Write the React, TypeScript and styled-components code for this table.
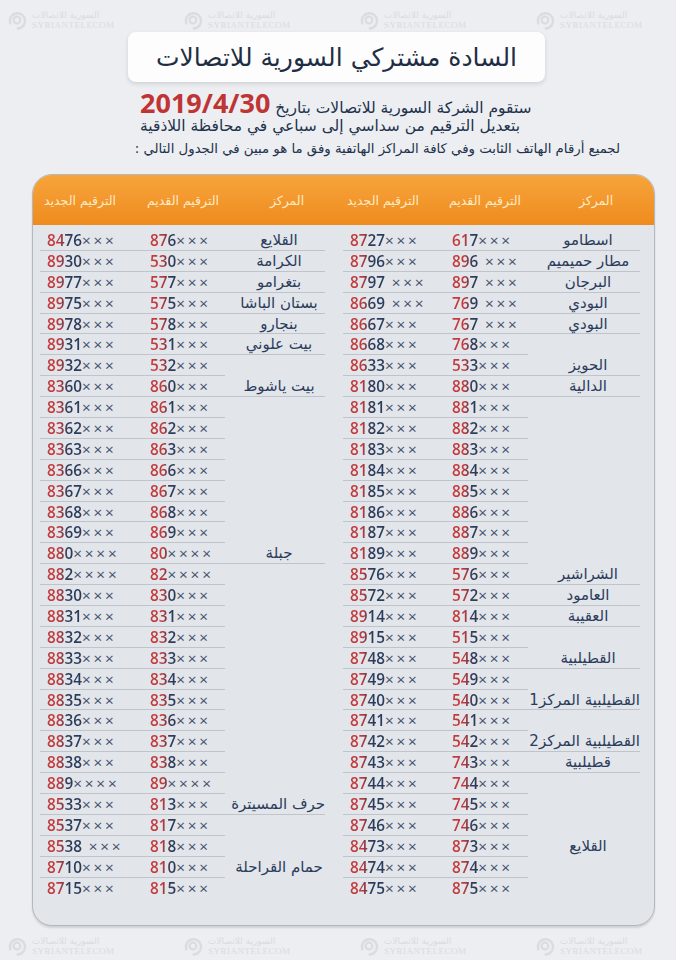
import React from "react";
import styled, { createGlobalStyle } from "styled-components";

type Row = [string, string];

interface Group {
    name?: string;
    rows: Row[];
}

const range = (from: number, to: number) => {
    const out: number[] = [];
    for (let i = from; i <= to; i++) out.push(i);
    return out;
};

const rightGroups: Group[] = [
    {name: "اسطامو", rows: [["8727×××", "617×××"]]},
    {name: "مطار حميميم", rows: [["8796×××", "896 ×××"]]},
    {name: "البرجان", rows: [["8797 ×××", "897 ×××"]]},
    {name: "البودي", rows: [["8669 ×××", "769 ×××"]]},
    {name: "البودي", rows: [["8667×××", "767 ×××"], ["8668×××", "768×××"]]},
    {name: "الحويز", rows: [["8633×××", "533×××"]]},
    {
        name: "الدالية",
        rows: [
            ...range(8180, 8187).map((n): Row => [`${n}×××`, `${n - 7300}×××`]),
            ["8189×××", "889×××"],
        ],
    },
    {name: "الشراشير", rows: [["8576×××", "576×××"]]},
    {name: "العامود", rows: [["8572×××", "572×××"]]},
    {name: "العقيبة", rows: [["8914×××", "814×××"], ["8915×××", "515×××"]]},
    {name: "القطيلبية", rows: [["8748×××", "548×××"], ["8749×××", "549×××"]]},
    {name: "القطيلبية المركز1", rows: [["8740×××", "540×××"], ["8741×××", "541×××"]]},
    {name: "القطيلبية المركز2", rows: [["8742×××", "542×××"]]},
    {
        name: "قطيلبية",
        rows: range(8743, 8746).map((n): Row => [`${n}×××`, `${n - 8000}×××`]),
    },
    {
        name: "القلايع",
        rows: range(8473, 8475).map((n): Row => [`${n}×××`, `${n - 7600}×××`]),
    },
];

const leftGroups: Group[] = [
    {name: "القلايع", rows: [["8476×××", "876×××"]]},
    {name: "الكرامة", rows: [["8930×××", "530×××"]]},
    {name: "بتغرامو", rows: [["8977×××", "577×××"]]},
    {name: "بستان الباشا", rows: [["8975×××", "575×××"]]},
    {name: "بنجارو", rows: [["8978×××", "578×××"]]},
    {name: "بيت علوني", rows: [["8931×××", "531×××"], ["8932×××", "532×××"]]},
    {
        name: "بيت ياشوط",
        rows: [8360, 8361, 8362, 8363, 8366, 8367, 8368, 8369].map(
            (n): Row => [`${n}×××`, `${n - 7500}×××`]
        ),
    },
    {
        name: "جبلة",
        rows: [
            ["880××××", "80××××"],
            ["882××××", "82××××"],
            ...range(8830, 8838).map((n): Row => [`${n}×××`, `${n - 8000}×××`]),
            ["889××××", "89××××"],
        ],
    },
    {
        name: "حرف المسيترة",
        rows: [["8533×××", "813×××"], ["8537×××", "817×××"], ["8538 ×××", "818×××"]],
    },
    {name: "حمام القراحلة", rows: [["8710×××", "810×××"], ["8715×××", "815×××"]]},
];

const ROW_H = 20.9;

const GlobalStyle = createGlobalStyle`
  html, body {
    margin: 0;
    padding: 0;
    background: #eceef1;
  }

  body {
    font-family: "DejaVu Sans", sans-serif;
  }
`;

const Page = styled.div`
  width: 676px;
  height: 960px;
  overflow: hidden;
  padding-top: 8px;
  box-sizing: border-box;
  background: #eceef1;
`;

// faint repeated company mark printed on the sheet
const MarkRow = styled.div<{ $top?: number }>`
  display: grid;
  grid-template-columns: repeat(4, 176px);
  height: 24px;
  padding-left: 6px;
  margin-top: ${p => p.$top || 0}px;
`;

const Mark = styled.div`
  display: flex;
  align-items: center;
  gap: 4px;
  color: #d9dce0;
`;

const MarkText = styled.div`
  display: flex;
  flex-direction: column;
  line-height: 10px;
  font-size: 9px;

  span:last-child {
    font-family: "Liberation Serif", serif;
    letter-spacing: 0.5px;
  }
`;

const TitleBox = styled.div`
  width: 417px;
  height: 50px;
  margin-left: 128px;
  background: #fdfdfd;
  border-radius: 8px;
  box-shadow: 0 2px 4px rgba(40, 50, 70, 0.15);
  display: flex;
  align-items: center;
  justify-content: center;
  direction: rtl;
`;

const Title = styled.h1`
  margin: 0;
  font: 400 25px "DejaVu Sans", sans-serif;
  color: #1f2e44;
`;

const Intro = styled.div`
  margin: 9px 0 0 140px;
  width: 480px;
  direction: rtl;
  text-align: left;
  color: #22324c;
  font-family: "DejaVu Sans", sans-serif;
`;

const IntroLine = styled.div<{ $h: number; $size: number }>`
  height: ${p => p.$h}px;
  line-height: ${p => p.$h}px;
  font-size: ${p => p.$size}px;
  white-space: nowrap;
`;

const DateText = styled.span`
  color: #bf3434;
  font: 700 27px/24px "Open Sans", sans-serif;
`;

const Card = styled.div`
  margin: 14px 0 0 32px;
  width: 621px;
  border-radius: 20px;
  background: #e2e5e9;
  border: 1px solid #b3b8bf;
  box-shadow: 0 2px 2px rgba(0, 0, 0, 0.12);
  overflow: hidden;
`;

const HeaderBar = styled.div`
  height: 50px;
  background: linear-gradient(#f6a43c, #ef8b1e);
  display: flex;
  direction: rtl;
  gap: 18px;
  padding: 0 14px 0 7px;
`;

const Body = styled.div`
  display: flex;
  direction: rtl;
  gap: 18px;
  padding: 5px 14px 26px 7px;
`;

const Half = styled.div<{ $cols: string }>`
  display: grid;
  grid-template-columns: ${p => p.$cols};
  grid-auto-rows: ${ROW_H}px;
`;

const HeadLabel = styled.div<{ $center?: boolean }>`
  display: flex;
  align-items: center;
  justify-content: ${p => (p.$center ? "center" : "flex-end")};
  padding: ${p => (p.$center ? "0 0 0 24px" : "0 0 0 4px")};
  color: #fdebc6;
  font-size: 12.5px;
  white-space: nowrap;
  height: 50px;
`;

const NameCell = styled.div<{ $span: number; $last: boolean }>`
  grid-row: span ${p => p.$span};
  grid-column: 1;
  border-bottom: ${p => (p.$last ? "none" : "1px solid #bfc4cb")};
  text-align: center;
  padding-left: 8px;
  line-height: ${ROW_H}px;
  font-size: 15px;
  color: #2b3c5c;
  white-space: nowrap;
  box-sizing: border-box;
`;

const NumCell = styled.div<{ $col: number; $last: boolean }>`
  grid-column: ${p => p.$col};
  direction: ltr;
  unicode-bidi: bidi-override;
  text-align: left;
  padding-left: 7px;
  border-bottom: ${p => (p.$last ? "none" : "1px solid #bfc4cb")};
  font: 600 15.3px/${ROW_H}px "Open Sans", sans-serif;
  white-space: pre;
  box-sizing: border-box;
`;

const Digits = styled.span`
  background: linear-gradient(90deg, #c23a3c 0, #c23a3c 12px, #2a3c5c 21px);
  -webkit-background-clip: text;
  background-clip: text;
  color: transparent;
`;

const Crosses = styled.span`
  color: #3f4f6c;
  font-weight: 400;
  letter-spacing: 2.8px;
`;

function Number({value}: { value: string }) {
    const m = value.match(/^(\d+)(\s*)(×+)$/);
    if (!m) return <>{value}</>;
    return (
        <>
            <Digits>{m[1]}</Digits>
            <Crosses>{m[2] + m[3]}</Crosses>
        </>
    );
}

function TableHalf({groups, cols}: { groups: Group[]; cols: string }) {
    const total = groups.reduce((s, g) => s + g.rows.length, 0);
    let idx = 0;
    return (
        <Half $cols={cols}>
            {groups.map((g, gi) => (
                <React.Fragment key={gi}>
                    <NameCell $span={g.rows.length} $last={gi === groups.length - 1}
                              style={{gridRowStart: idx + 1}}>
                        {g.name}
                    </NameCell>
                    {g.rows.map((r, ri) => {
                        idx += 1;
                        const last = idx === total;
                        return (
                            <React.Fragment key={ri}>
                                <NumCell $col={2} $last={last} style={{gridRowStart: idx}}>
                                    <Number value={r[1]}/>
                                </NumCell>
                                <NumCell $col={3} $last={last} style={{gridRowStart: idx}}>
                                    <Number value={r[0]}/>
                                </NumCell>
                            </React.Fragment>
                        );
                    })}
                </React.Fragment>
            ))}
        </Half>
    );
}

function HeaderHalf({cols}: { cols: string }) {
    return (
        <Half $cols={cols}>
            <HeadLabel $center>المركز</HeadLabel>
            <HeadLabel>الترقيم القديم</HeadLabel>
            <HeadLabel>الترقيم الجديد</HeadLabel>
        </Half>
    );
}

function RingLogo() {
    return (
        <svg width="22" height="22" viewBox="0 0 26 26" fill="none" stroke="currentColor">
            <path d="M5 17a9 9 0 1 1 9 6" strokeWidth="3" strokeLinecap="round"/>
            <circle cx="13" cy="13" r="4" strokeWidth="2.5"/>
        </svg>
    );
}

function Marks({top}: { top?: number }) {
    return (
        <MarkRow $top={top}>
            {[0, 1, 2, 3].map(i => (
                <Mark key={i}>
                    <RingLogo/>
                    <MarkText>
                        <span>السورية للاتصالات</span>
                        <span>SYRIANTELECOM</span>
                    </MarkText>
                </Mark>
            ))}
        </MarkRow>
    );
}

const RIGHT_COLS = "112px 83px 102px";
const LEFT_COLS = "100px 82px 103px";

export default function App() {
    return (
        <Page>
            <GlobalStyle/>
            <Marks/>
            <TitleBox>
                <Title>السادة مشتركي السورية للاتصالات</Title>
            </TitleBox>
            <Intro>
                <IntroLine $h={24} $size={15.5}>
                    ستقوم الشركة السورية للاتصالات بتاريخ <DateText>2019/4/30</DateText>
                </IntroLine>
                <IntroLine $h={23} $size={15.5}>
                    بتعديل الترقيم من سداسي إلى سباعي في محافظة اللاذقية
                </IntroLine>
                <IntroLine $h={22} $size={13.3}>
                    لجميع أرقام الهاتف الثابت وفي كافة المراكز الهاتفية وفق ما هو مبين في الجدول التالي :
                </IntroLine>
            </Intro>
            <Card>
                <HeaderBar>
                    <HeaderHalf cols={RIGHT_COLS}/>
                    <HeaderHalf cols={LEFT_COLS}/>
                </HeaderBar>
                <Body>
                    <TableHalf groups={rightGroups} cols={RIGHT_COLS}/>
                    <TableHalf groups={leftGroups} cols={LEFT_COLS}/>
                </Body>
            </Card>
            <Marks top={8}/>
        </Page>
    );
}
